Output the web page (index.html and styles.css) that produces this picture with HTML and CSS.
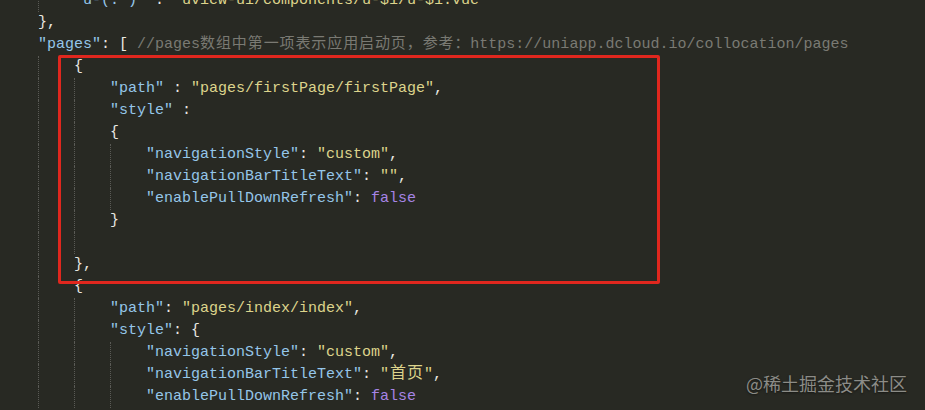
FILE: index.html
```html
<!DOCTYPE html>
<html lang="en">
<head>
    <meta charset="UTF-8">
    <title>pages.json</title>
    <link rel="stylesheet" href="styles.css">
</head>
<body>

<div class="editor">
    <div class="code">
        <div class="line"><span class="ind"></span><span class="ind g"></span><span class="k">"u-(.*)"</span><span class="p"> : </span><span class="s">"uview-ui/components/u-$1/u-$1.vue"</span></div>
        <div class="line"><span class="ind"></span><span class="p">},</span></div>
        <div class="line"><span class="ind"></span><span class="k">"pages"</span><span class="p">: [ </span><span class="c">//pages<span class="cjk">数组中第一项表示应用启动页，参考：</span>https://uniapp.dcloud.io/collocation/pages</span></div>
        <div class="line"><span class="ind"></span><span class="ind g"></span><span class="p">{</span></div>
        <div class="line"><span class="ind"></span><span class="ind g"></span><span class="ind g"></span><span class="k">"path"</span><span class="p"> : </span><span class="s">"pages/firstPage/firstPage"</span><span class="p">,</span></div>
        <div class="line"><span class="ind"></span><span class="ind g"></span><span class="ind g"></span><span class="k">"style"</span><span class="p"> :</span></div>
        <div class="line"><span class="ind"></span><span class="ind g"></span><span class="ind g"></span><span class="p">{</span></div>
        <div class="line"><span class="ind"></span><span class="ind g"></span><span class="ind g"></span><span class="ind g"></span><span class="k">"navigationStyle"</span><span class="p">: </span><span class="s">"custom"</span><span class="p">,</span></div>
        <div class="line"><span class="ind"></span><span class="ind g"></span><span class="ind g"></span><span class="ind g"></span><span class="k">"navigationBarTitleText"</span><span class="p">: </span><span class="s">""</span><span class="p">,</span></div>
        <div class="line"><span class="ind"></span><span class="ind g"></span><span class="ind g"></span><span class="ind g"></span><span class="k">"enablePullDownRefresh"</span><span class="p">: </span><span class="b">false</span></div>
        <div class="line"><span class="ind"></span><span class="ind g"></span><span class="ind g"></span><span class="p">}</span></div>
        <div class="line"><span class="ind"></span><span class="ind g"></span><span class="ind g"></span></div>
        <div class="line"><span class="ind"></span><span class="ind g"></span><span class="p">},</span></div>
        <div class="line"><span class="ind"></span><span class="ind g"></span><span class="p">{</span></div>
        <div class="line"><span class="ind"></span><span class="ind g"></span><span class="ind g"></span><span class="k">"path"</span><span class="p">: </span><span class="s">"pages/index/index"</span><span class="p">,</span></div>
        <div class="line"><span class="ind"></span><span class="ind g"></span><span class="ind g"></span><span class="k">"style"</span><span class="p">: {</span></div>
        <div class="line"><span class="ind"></span><span class="ind g"></span><span class="ind g"></span><span class="ind g"></span><span class="k">"navigationStyle"</span><span class="p">: </span><span class="s">"custom"</span><span class="p">,</span></div>
        <div class="line"><span class="ind"></span><span class="ind g"></span><span class="ind g"></span><span class="ind g"></span><span class="k">"navigationBarTitleText"</span><span class="p">: </span><span class="s">"<span class="cjk2">首页</span>"</span><span class="p">,</span></div>
        <div class="line"><span class="ind"></span><span class="ind g"></span><span class="ind g"></span><span class="ind g"></span><span class="k">"enablePullDownRefresh"</span><span class="p">: </span><span class="b">false</span></div>
    </div>

    <!-- red marker drawn over the first page entry -->
    <div class="mark"></div>

    <div class="watermark">@稀土掘金技术社区</div>
</div>

</body>
</html>
```

FILE: styles.css
```css
body {
    margin: 0;
    background-color: #282923;
}

.editor {
    position: relative;
    width: 925px;
    height: 410px;
    overflow: hidden;
    background-color: #282923;
}

.code {
    margin-top: -10px;
    padding-left: 2px;
    font-family: "Liberation Mono", "Noto Sans CJK SC", monospace;
    font-size: 15px;
    line-height: 22px;
    color: #e8e8e2;
}

.line {
    height: 22px;
    white-space: pre;
}

.ind {
    display: inline-block;
    width: 36px;
    height: 22px;
    vertical-align: top;
    box-sizing: border-box;
}

.ind.g {
    border-left: 1px dotted #5a5a55;
}

.k {
    color: #95c6e9;
}

.s {
    color: #ddd48c;
}

.p {
    color: #e8e8e2;
}

.b {
    color: #a684e6;
}

.c {
    color: #7a7a73;
}

.cjk {
    font-family: "Noto Sans CJK SC", sans-serif;
    line-height: 15px;
    letter-spacing: 0.9px;
}

.cjk2 {
    font-family: "Noto Sans CJK SC", sans-serif;
    font-size: 16px;
    line-height: 15px;
    letter-spacing: 1px;
    padding-left: 1px;
}

.mark {
    position: absolute;
    left: 58px;
    top: 55px;
    width: 602px;
    height: 229px;
    box-sizing: border-box;
    border: 3px solid #e0271e;
    border-radius: 2px;
}

.watermark {
    position: absolute;
    right: 18px;
    bottom: 16px;
    font-family: "Noto Sans CJK SC", sans-serif;
    font-size: 18px;
    line-height: 22px;
    color: #8c8c87;
    text-shadow: 0 1px 2px rgba(0, 0, 0, 0.5);
}
```
